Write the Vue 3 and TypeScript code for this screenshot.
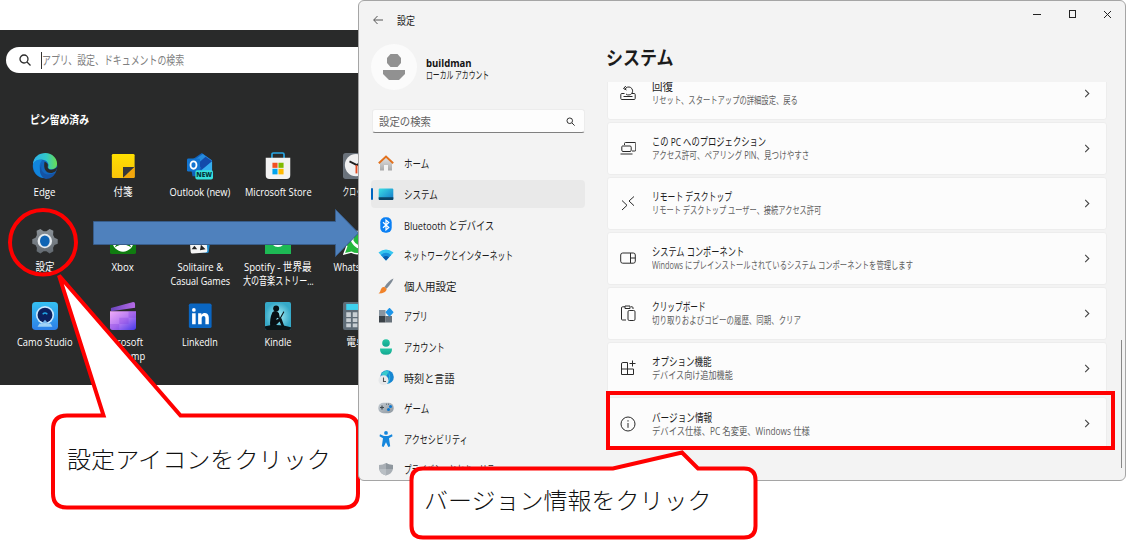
<script setup lang="ts">
interface PinnedApp { icon: string; lines: { text: string; width: number }[] }
interface NavItem { icon: string; text: string; width: number; active?: boolean }
interface Card { icon: string; title: string; titleWidth: number; sub: string; subWidth: number }

// Condenses a label horizontally so that it takes exactly the given width.
const vFit = {
  mounted(el: HTMLElement, binding: { value: number }) {
    const natural = el.offsetWidth
    if (natural > 0) el.style.transform = `scaleX(${binding.value / natural})`
  },
}

const apps: PinnedApp[] = [
  { icon: 'edge', lines: [{ text: 'Edge', width: 22 }] },
  { icon: 'note', lines: [{ text: '付箋', width: 19 }] },
  { icon: 'outlook', lines: [{ text: 'Outlook (new)', width: 61 }] },
  { icon: 'store', lines: [{ text: 'Microsoft Store', width: 67 }] },
  { icon: 'clock', lines: [{ text: 'クロック', width: 27 }] },
  { icon: 'gear', lines: [{ text: '設定', width: 19 }] },
  { icon: 'xbox', lines: [{ text: 'Xbox', width: 22 }] },
  { icon: 'cards', lines: [{ text: 'Solitaire &', width: 46 }, { text: 'Casual Games', width: 60 }] },
  { icon: 'spotify', lines: [{ text: 'Spotify - 世界最', width: 68 }, { text: '大の音楽ストリー...', width: 71 }] },
  { icon: 'whatsapp', lines: [{ text: 'WhatsApp', width: 44 }] },
  { icon: 'camo', lines: [{ text: 'Camo Studio', width: 56 }] },
  { icon: 'clip', lines: [{ text: 'Microsoft', width: 42 }, { text: 'Clipchamp', width: 46 }] },
  { icon: 'linkedin', lines: [{ text: 'LinkedIn', width: 36 }] },
  { icon: 'kindle', lines: [{ text: 'Kindle', width: 27 }] },
  { icon: 'calc', lines: [{ text: '電卓', width: 19 }] },
]

const nav: NavItem[] = [
  { icon: 'home', text: 'ホーム', width: 25 },
  { icon: 'system', text: 'システム', width: 34, active: true },
  { icon: 'bluetooth', text: 'Bluetooth とデバイス', width: 90 },
  { icon: 'wifi', text: 'ネットワークとインターネット', width: 109 },
  { icon: 'brush', text: '個人用設定', width: 53 },
  { icon: 'apps', text: 'アプリ', width: 24 },
  { icon: 'account', text: 'アカウント', width: 41 },
  { icon: 'time', text: '時刻と言語', width: 51 },
  { icon: 'game', text: 'ゲーム', width: 25 },
  { icon: 'access', text: 'アクセシビリティ', width: 64 },
  { icon: 'shield', text: 'プライバシーとセキュリティ', width: 98 },
]

const cards: Card[] = [
  { icon: 'recovery', title: '回復', titleWidth: 21, sub: 'リセット、スタートアップの詳細設定、戻る', subWidth: 146 },
  { icon: 'project', title: 'この PC へのプロジェクション', titleWidth: 114, sub: 'アクセス許可、ペアリング PIN、見つけやすさ', subWidth: 157 },
  { icon: 'remote', title: 'リモート デスクトップ', titleWidth: 80, sub: 'リモート デスクトップ ユーザー、接続アクセス許可', subWidth: 169 },
  { icon: 'component', title: 'システム コンポーネント', titleWidth: 92, sub: 'Windows にプレインストールされているシステム コンポーネントを管理します', subWidth: 261 },
  { icon: 'clipboard', title: 'クリップボード', titleWidth: 54, sub: '切り取りおよびコピーの履歴、同期、クリア', subWidth: 149 },
  { icon: 'optional', title: 'オプション機能', titleWidth: 60, sub: 'デバイス向け追加機能', subWidth: 81 },
  { icon: 'info', title: 'バージョン情報', titleWidth: 60, sub: 'デバイス仕様、PC 名変更、Windows 仕様', subWidth: 158 },
]
</script>

<template>
  <div class="stage">
    <svg class="sprite" aria-hidden="true">
      <defs>
        <linearGradient id="gEdge" x1="0" y1="0" x2="1" y2="0"><stop offset="0" stop-color="#2cb0ee" /><stop offset=".55" stop-color="#32c8c8" /><stop offset="1" stop-color="#6ade50" /></linearGradient>
        <linearGradient id="gNote" x1="0" y1="0" x2="0" y2="1"><stop offset="0" stop-color="#ffe000" /><stop offset="1" stop-color="#f9c40b" /></linearGradient>
        <linearGradient id="gGear" x1="0" y1="0" x2="0" y2="1"><stop offset="0" stop-color="#8b9298" /><stop offset="1" stop-color="#626970" /></linearGradient>
        <linearGradient id="gCamo" x1="0" y1="0" x2="0" y2="1"><stop offset="0" stop-color="#35c1f2" /><stop offset="1" stop-color="#2d7fe8" /></linearGradient>
        <linearGradient id="gClip" x1="0" y1="0" x2="1" y2="1"><stop offset="0" stop-color="#f0aaf8" /><stop offset=".5" stop-color="#b57af2" /><stop offset="1" stop-color="#4338e8" /></linearGradient>
        <linearGradient id="gClipTop" x1="0" y1="0" x2="1" y2="0"><stop offset="0" stop-color="#6a45bd" /><stop offset="1" stop-color="#b76be8" /></linearGradient>
        <radialGradient id="gKindle"><stop offset="0" stop-color="#a8f0f8" /><stop offset="1" stop-color="#36a9c8" /></radialGradient>
        <linearGradient id="gSystem" x1="0" y1="0" x2="1" y2="1"><stop offset="0" stop-color="#3ae0e5" /><stop offset="1" stop-color="#1475c8" /></linearGradient>
        <linearGradient id="gHome" x1="0" y1="0" x2="0" y2="1"><stop offset="0" stop-color="#e4e4e4" /><stop offset="1" stop-color="#a8a8a8" /></linearGradient>
        <linearGradient id="gTeal" x1="0" y1="0" x2="0" y2="1"><stop offset="0" stop-color="#26c6a4" /><stop offset="1" stop-color="#12a590" /></linearGradient>
        <linearGradient id="gPad" x1="0" y1="0" x2="1" y2="1"><stop offset="0" stop-color="#c3cbd2" /><stop offset="1" stop-color="#8e979f" /></linearGradient>
      </defs>

      <symbol id="i-edge" viewBox="0 0 28 30">
        <circle cx="14" cy="15" r="13.2" fill="#1266bd" />
        <path d="M1 14C1 5 8 1 14.500 1 22 1 27 7 27 12.500c0 4-3 6-6.500 6-2 0-3.500-1-3-2.500C19 12 15 8 10 8 5 8 2 11 1 14Z" fill="url(#gEdge)" />
        <path d="M1 14C2 9 7 7 11 9c-4 3-4 11 2 18.500C6 28 1 21 1 14Z" fill="#1185dc" />
        <path d="M11 12c-3 5 0 13 8 12 3 0 5-1 7-3-2 5-6 8-11 8-6-2-9-10-4-17Z" fill="#1553a4" />
        <path d="M13.500 10.500c2.500 1 4 2.500 3.500 4.500-.8 2 1 4 4 4 2 0 4-1 6-3 0 4-3 6.500-7 6.500-5 0-8-4-6.500-12Z" fill="#292a2a" />
      </symbol>
      <symbol id="i-note" viewBox="0 0 28 30">
        <rect x="2" y="2" width="24.500" height="26" rx="1.500" fill="url(#gNote)" />
        <path d="M14 28V16h12.500Z" fill="#37373a" /><path d="M14 28L26.500 16V26.500Q26.500 28 25 28Z" fill="#f3a60c" />
      </symbol>
      <symbol id="i-outlook" viewBox="0 0 28 30">
        <path d="M3 10 16 1l11 8v17H6Z" fill="#1162bb" /><path d="M6 10 17 2l10 7-11 9Z" fill="#268bdd" /><path d="M12 12 20 5l7 5-11 9Z" fill="#134bab" />
        <path d="M16 19 27 10v11H16Z" fill="#35aef0" />
        <rect x="0" y="7" width="14" height="14" rx="1.500" fill="#1274d0" />
        <ellipse cx="7" cy="14" rx="3.200" ry="4" fill="none" stroke="#fff" stroke-width="2" />
        <rect x="9" y="19.500" width="19" height="10" rx="2" fill="#36e0dc" />
        <text x="18.500" y="27.300" class="badge-text">NEW</text>
      </symbol>
      <symbol id="i-store" viewBox="0 0 28 30">
        <path d="M7.500 7V2.500Q7.500 1 9 1H19Q20.500 1 20.500 2.500V7" fill="none" stroke="#27a7e5" stroke-width="1.800" />
        <path d="M.8 6h26.400v19q0 4-4 4H4.800q-4 0-4-4Z" fill="#f2f2f2" />
        <path fill="#f25022" d="M8 11.500h5.500V17H8Z" /><path fill="#7fba00" d="M14.500 11.500H20V17h-5.500Z" /><path fill="#00a4ef" d="M8 18h5.500v6H8Z" /><path fill="#ffb900" d="M14.500 18H20v6h-5.500Z" />
      </symbol>
      <symbol id="i-clock" viewBox="0 0 28 30">
        <rect x="0" y="1" width="28" height="28" rx="3" fill="#6a727b" /><circle cx="14" cy="14" r="12" fill="#f0f0f0" />
        <path d="M7 10l8 4 7-5" fill="none" stroke="#202020" stroke-width="2" /><path d="M14.500 14v9" stroke="#e54b20" stroke-width="2" />
      </symbol>
      <symbol id="i-gear" viewBox="0 0 28 30">
        <path d="M9 2l3.500 2.500h3L19 2l4 2-.3 4.500 1.500 3 3.500 1.500v5l-3.500 1.300-1.500 3L23 26l-4 2.500-3.500-2.500h-3L9 28.500 5 26l.3-3.700-1.500-3L.3 18v-5l3.500-1.500 1.500-3L5 4Z" fill="url(#gGear)" />
        <circle cx="13.800" cy="15" r="7.800" fill="#e6ebef" /><ellipse cx="13.800" cy="15" rx="5.200" ry="6" fill="#0f64b4" />
      </symbol>
      <symbol id="i-xbox" viewBox="0 0 28 30">
        <rect x="0" y="1" width="28" height="28" rx="2" fill="#107c10" /><circle cx="14" cy="15" r="11.500" fill="#fff" />
        <path d="M5 22Q9 15 14 12q5 3 9 10-3-2-5-2.500L14 17l-4 2.500Q8 20 5 22Z" fill="#107c10" />
      </symbol>
      <symbol id="i-cards" viewBox="0 0 28 30">
        <rect x="7" y="3" width="18" height="24" rx="2" transform="rotate(8 15 15)" fill="#1b88cc" /><rect x="3" y="4" width="18" height="24" rx="2" transform="rotate(-5 12 15)" fill="#f4f4f4" />
        <path d="M5 24l3-4 3 4Z" fill="#222" /><path d="M14 25l1-6 5 5Z" fill="#222" />
      </symbol>
      <symbol id="i-spotify" viewBox="0 0 28 30">
        <rect x="0" y="1" width="28" height="28" fill="#1db954" /><circle cx="14" cy="13.500" r="8" fill="#fff" /><path d="M9 18q5-2 10 1" fill="none" stroke="#1db954" stroke-width="1.500" />
      </symbol>
      <symbol id="i-whatsapp" viewBox="0 0 28 30">
        <path d="M1 29 4 21A12 12 0 1 1 9 27Z" fill="#25b83d" stroke="#fff" stroke-width="1.500" /><path d="M8 9q2-2 4 3l-1 2q2 4 5 5l2-1q4 1 3 4-4 3-9-2T8 9Z" fill="#fff" />
      </symbol>
      <symbol id="i-camo" viewBox="0 0 28 30">
        <rect y="0" width="28" height="30" rx="4" fill="url(#gCamo)" />
        <path d="M8 23h12l2 3.500H6Z" fill="#9fd2f7" /><circle cx="14" cy="14" r="9.800" fill="#c9e8fd" /><circle cx="14" cy="14" r="8" fill="#0c205e" /><path d="M10.500 23l3.500-4 3.500 4Z" fill="#75b4ec" /><path d="M11.500 13q2.500-2.500 5 0" fill="none" stroke="#22a9e6" stroke-width="1.500" />
      </symbol>
      <symbol id="i-clip" viewBox="0 0 28 30">
        <path d="M1 6.500 25 0q2 0 2 2v4L1 10Z" fill="url(#gClipTop)" /><path d="M0 10h28v17q0 3-3 3H3q-3 0-3-3Z" fill="url(#gClip)" /><path d="M0 23.500h10V17h10v-7h8v7h-8v6.500H10V30H3q-3 0-3-3Z" fill="#823bdf" opacity=".3" />
      </symbol>
      <symbol id="i-linkedin" viewBox="0 0 28 30">
        <rect x="2" y="1.500" width="24.500" height="26.500" rx="2" fill="#0a66c2" /><path d="M5.500 12h3.800v12H5.500ZM12 12h3.500v1.800c2-3.200 8-2.600 8 2.700V24h-3.700v-6.500c0-3.500-4-3-4 0V24H12Z" fill="#fff" /><circle cx="7.400" cy="8.500" r="2" fill="#fff" />
      </symbol>
      <symbol id="i-kindle" viewBox="0 0 28 30">
        <rect width="28" height="30" rx="2" fill="url(#gKindle)" /><path d="M0 26q14-3 28 1v1q0 2-2 2H2q-2 0-2-2Z" fill="#0a1518" />
        <circle cx="12" cy="7" r="3.200" fill="#081014" /><path d="M8 11q4-3 7 1l1 5 4-7 .8.800-4.600 8.200-3-2-1.500 2 6-1.500 3 8.500-2.500.5-2.500-5.500-4 4-6 1q-1-8 2.300-15Z" fill="#081014" />
      </symbol>
      <symbol id="i-calc" viewBox="0 0 28 30">
        <rect x="0" width="28" height="30" rx="2" fill="#5f6c77" /><rect x="3.500" y="2" width="21" height="6.500" fill="#3fd1ee" /><path d="M3.500 11h5v5h-5ZM10.500 11h5v5h-5ZM17.500 11h5v5h-5ZM3.500 17.500h5v4h-5ZM10.500 17.500h5v4h-5ZM17.500 17.500h5v4h-5ZM3.500 23h5v4h-5ZM10.500 23h5v4h-5ZM17.500 23h5v4h-5Z" fill="#c9cfd4" />
      </symbol>

      <symbol id="i-home" viewBox="0 0 16 16"><path d="M2 7.500 8 2l6 5.500V15.500H10V10H6v5.500H2Z" fill="url(#gHome)" /><path d="M.8 8.300 8 1.600l7.200 6.700" fill="none" stroke="#e2711d" stroke-width="1.900" /></symbol>
      <symbol id="i-system" viewBox="0 0 16 16"><rect x=".7" y="2.500" width="14.600" height="11.500" rx="1" fill="url(#gSystem)" /><path d="M.7 11.300h14.600v1.700q0 1-1 1H1.700q-1 0-1-1Z" fill="#0b4668" /></symbol>
      <symbol id="i-bluetooth" viewBox="0 0 16 16"><rect x="2.300" y=".3" width="11.400" height="15.400" rx="5" fill="#0b80f4" /><path d="M5 5.300 10.800 10.500 8 13V3l2.800 2.500L5 10.700" fill="none" stroke="#fff" stroke-width="1.200" /></symbol>
      <symbol id="i-wifi" viewBox="0 0 16 16"><path d="M.5 5.500Q8-.5 15.500 5.500L8 13.500Z" fill="#35c5ef" /><path d="M2.800 7.900Q8 3.500 13.200 7.900L8 13.500Z" fill="#1890dc" /><path d="M5 10.200Q8 7.700 11 10.200L8 13.500Z" fill="#0a58a8" /></symbol>
      <symbol id="i-brush" viewBox="0 0 16 16"><path d="M15.500.5q-5 2-9 8.500l2 1.800Q14 5 15.500.5Z" fill="#7e8995" /><path d="M6.300 8.700l2.400 2.400q-.5 4.400-8.200 4.400Q2.500 14 2.800 11.500 3.500 9 6.300 8.700Z" fill="#f1832a" /></symbol>
      <symbol id="i-apps" viewBox="0 0 16 16"><path d="M1 2h6.500v6H1Z" fill="#8995a0" /><path d="M1 8h6.500v6.500H1Z" fill="#3b4248" /><path d="M7.500 8H14v6.500H7.500Z" fill="#68727b" /><path d="M11.500.7 14.700 4.200 11.500 7.700 8.300 4.200Z" fill="#1d95e8" stroke="#1d95e8" stroke-width="1.500" stroke-linejoin="round" /></symbol>
      <symbol id="i-account" viewBox="0 0 16 16"><circle cx="8" cy="4" r="3.800" fill="url(#gTeal)" /><path d="M2 9.500h12q.5 6.300-6 6.300T2 9.500Z" fill="url(#gTeal)" /></symbol>
      <symbol id="i-time" viewBox="0 0 16 16"><circle cx="9" cy="7" r="6.800" fill="#1686d2" /><path d="M3 4Q7-1 11 1L8 7Z" fill="#38c9cc" /><path d="M9 .5q5 6 1 13" fill="none" stroke="#29b9dc" /><circle cx="5.500" cy="10.300" r="5" fill="#e6e8ea" /><path d="M5.500 7.500v4H8" fill="none" stroke="#4c5358" stroke-width="1.100" /></symbol>
      <symbol id="i-game" viewBox="0 0 16 16"><rect x=".3" y="2.800" width="15.400" height="10.400" rx="5" fill="url(#gPad)" /><path d="M4 5.500v4M2 7.500h4" stroke="#424a51" stroke-width="1.200" /><path d="M8 4.200h4" stroke="#555d65" stroke-dasharray="1 1" /><circle cx="12.500" cy="6.500" r="1.500" fill="#0b78d0" /><circle cx="10.500" cy="9.500" r="1.500" fill="#0b78d0" /></symbol>
      <symbol id="i-access" viewBox="0 0 16 16"><circle cx="8" cy="1.900" r="1.900" fill="#1586dc" /><path d="M2 3.300 6 5h4l4-1.700.5 1.900L11 7.200l1.200 8L10.300 16 8 11.200 5.700 16l-1.900-.8L5 7.200 1.500 5.200Z" fill="#1586dc" /></symbol>
      <symbol id="i-shield" viewBox="0 0 16 16"><path d="M1 4Q5 4 8 2q3 2 7 2v4q-1 5-7 6.500Q2 13 1 8Z" fill="#a9afb5" /><path d="M8 2q3 2 7 2v4H8Z" fill="#8f979e" /><path d="M1.500 8H8v6.500Q2.500 13 1.500 8Z" fill="#b9bfc4" /></symbol>

      <symbol id="i-recovery" viewBox="0 0 16 16"><path d="M4.500 8.500H1.800Q.8 8.500.8 9.500v4q0 1 1 1h12.400q1 0 1-1v-4q0-1-1-1H12M3.500 11.500H12.500M6 9A4 4 0 1 0 5 4.300M5.800 1 3.500 3.500 6.500 5" /></symbol>
      <symbol id="i-project" viewBox="0 0 16 16"><path d="M4.500 5V3.500q0-1 1-1H15q.8 0 .8 1V10q0 1-1 1H12M2.500 6H10q1.200 0 1.200 1.200v3Q11.200 11.500 10 11.500H3q-1.200 0-1.200-1.300V7Q1.800 6 2.500 6M.5 14H12.500" /></symbol>
      <symbol id="i-remote" viewBox="0 0 16 16"><path d="M2 5.500 7 10.300 2 15M14 1.500 9 6l5 4.700" /></symbol>
      <symbol id="i-component" viewBox="0 0 16 16"><rect x=".7" y="3" width="14.600" height="10.200" rx="2" /><path d="M10.500 3v10M10.500 8h4.800" /></symbol>
      <symbol id="i-clipboard" viewBox="0 0 16 16"><path d="M5 1.800H2.500Q1.500 1.800 1.500 3v11q0 1 1 1H6M11 1.800h1q1 0 1 1V4M5 1h5v2.500H5Z" /><rect x="8" y="5.500" width="7" height="10" rx="1.300" /></symbol>
      <symbol id="i-optional" viewBox="0 0 16 16"><path d="M7.500 2.500H2.800Q1.500 2.500 1.500 4v10.500H13.500V9H1.500M7.500 2.500v12M12.500.5v6M9.500 3.500h6" /></symbol>
      <symbol id="i-info" viewBox="0 0 16 16"><circle cx="8" cy="8" r="7" /><path d="M8 7v4.800M8 4.200v1.400" /></symbol>
    </svg>

    <section class="start">
      <div class="start-search">
        <svg class="lens" viewBox="0 0 12 12"><circle cx="5" cy="5" r="4" /><path d="M8 8l3.500 3.500" /></svg>
        <i class="caret"></i>
        <span v-fit="142" class="label">アプリ、設定、ドキュメントの検索</span>
      </div>
      <h2 class="pinned"><span v-fit="59" class="label">ピン留め済み</span></h2>
      <div class="app-grid">
        <div v-for="app in apps" :key="app.icon" class="app">
          <svg class="app-icon"><use :href="`#i-${app.icon}`" /></svg>
          <span v-for="line in app.lines" :key="line.text" v-fit="line.width" class="app-line">{{ line.text }}</span>
        </div>
      </div>
    </section>

    <svg class="overlay" viewBox="0 0 1127 540">
      <path class="arrow" d="M93.500 221.500H335.500V209.500L358.500 233 335.500 256.500V244.500H93.500Z" />
      <ellipse class="mark" cx="43" cy="242.300" rx="33" ry="32.300" />
      <path class="mark filled" d="M67 415.500H103.500L59 275.500 180.500 415.500H344Q358 415.500 358 429.500V493.500Q358 507.500 344 507.500H67Q53 507.500 53 493.500V429.500Q53 415.500 67 415.500Z" />
    </svg>

    <section class="window">
      <header class="titlebar">
        <svg class="back" viewBox="0 0 10 10"><path d="M10 5H.8M4.500 1 .7 5l3.800 4" /></svg>
        <span v-fit="18" class="label window-name">設定</span>
        <svg class="controls" viewBox="0 0 80 12"><path d="M0 6.500h8M36 2.500h7M36 9.500h7M36.500 2v8M42.500 2v8" /><path d="M71 3l7 7M78 3l-7 7" /></svg>
      </header>
      <div class="body">
        <aside class="side">
          <div class="profile">
            <div class="avatar"><svg viewBox="0 0 22 26"><path d="M7.500 0h7L18 4v5l-3.500 4h-7L4 9V4Z" /><path d="M0 16h22v4l-6 6H6l-6-6Z" /></svg></div>
            <div class="who">
              <b><span v-fit="46" class="label">buildman</span></b>
              <span v-fit="63" class="label">ローカル アカウント</span>
            </div>
          </div>
          <div class="side-search">
            <span v-fit="52" class="label">設定の検索</span>
            <svg class="lens" viewBox="0 0 12 12"><circle cx="5" cy="5" r="3.700" /><path d="M8 8l3.500 3.500" /></svg>
          </div>
          <nav class="nav">
            <div v-for="item in nav" :key="item.icon" class="nav-item" :class="{ active: item.active }">
              <svg class="nav-icon"><use :href="`#i-${item.icon}`" /></svg>
              <span v-fit="item.width" class="label">{{ item.text }}</span>
            </div>
          </nav>
        </aside>
        <main class="main">
          <h1><span v-fit="67" class="label">システム</span></h1>
          <div class="scroller">
            <div class="cards">
              <div v-for="card in cards" :key="card.icon" class="card">
                <svg class="card-icon"><use :href="`#i-${card.icon}`" /></svg>
                <div class="card-text">
                  <span v-fit="card.titleWidth" class="label title">{{ card.title }}</span>
                  <span v-fit="card.subWidth" class="label sub">{{ card.sub }}</span>
                </div>
                <svg class="chevron" viewBox="0 0 6 10"><path d="M1 1l4 4-4 4" /></svg>
              </div>
            </div>
          </div>
        </main>
        <i class="scrollbar"></i>
      </div>
    </section>

    <svg class="overlay" viewBox="0 0 1127 540">
      <rect class="mark" x="608" y="393" width="505" height="55" />
      <path class="mark filled" d="M423 468.500H613L682 452.500 698 468.500H744Q755.500 468.500 755.500 480V526Q755.500 537.500 744 537.500H423Q411.500 537.500 411.500 526V480Q411.500 468.500 423 468.500Z" />
    </svg>
    <p class="note first"><span v-fit="264" class="label">設定アイコンをクリック</span></p>
    <p class="note second"><span v-fit="288" class="label">バージョン情報をクリック</span></p>
  </div>
</template>

<style>
html, body { margin: 0; background: #fff; overflow: hidden; }
</style>

<style scoped>
.stage { position: relative; width: 1127px; height: 540px; overflow: hidden; background: #fff; font-family: "Open Sans", "Noto Sans CJK JP", sans-serif; font-size: 11px; color: #1b1b1b; }
.stage * { box-sizing: border-box; }
.sprite { position: absolute; width: 0; height: 0; }
.badge-text { font: 800 7px "Open Sans", sans-serif; text-anchor: middle; fill: #06363d; }
.label { display: block; width: max-content; white-space: nowrap; transform-origin: left center; }
.lens { fill: none; stroke: #2b2b2b; stroke-width: 1.3; }

.start { position: absolute; left: 0; top: 30px; width: 360px; height: 355px; background: #292a2a; overflow: hidden; }
.start-search { display: flex; align-items: center; margin: 17px 0 0 6px; padding-left: 13px; width: 400px; height: 26px; border-radius: 13px; background: #fff; color: #808080; font-size: 12px; }
.start-search .lens { width: 12px; height: 12px; }
.caret { width: 1px; height: 17px; margin-left: 10px; background: #333; }
.pinned { margin: 38px 0 0 30px; height: 18px; line-height: 18px; font-size: 11.5px; font-weight: 700; color: #fff; }
.app-grid { display: grid; grid-template-columns: repeat(5, 77.7px); grid-auto-rows: 75px; width: 389px; margin: 23px 0 0 6px; }
.app { display: flex; flex-direction: column; align-items: center; color: #fff; }
.app-icon { width: 26px; height: 28px; margin-bottom: 5px; flex: none; }
.app-line { display: block; width: max-content; height: 14px; line-height: 14px; white-space: nowrap; font-size: 11px; }

.overlay { position: absolute; left: 0; top: 0; width: 1127px; height: 540px; }
.arrow { fill: #4f81bd; stroke: #385d8a; }
.mark { fill: none; stroke: #f00; stroke-width: 4; }
.filled { fill: #fff; }

.window { position: absolute; left: 358px; top: 0; width: 768px; height: 481px; border: 1px solid #a5a5a5; border-radius: 6px; background: #f3f3f3; overflow: hidden; }
.titlebar { display: flex; align-items: center; height: 38px; padding-left: 14px; }
.back { width: 10px; height: 10px; margin-top: -1px; fill: none; stroke: #555; }
.window-name { margin: -1px 0 0 14px; }
.controls { width: 80px; height: 12px; margin-left: auto; margin-right: 12px; margin-top: -13px; fill: none; stroke: #222; }
.body { display: flex; height: 441px; }
.side { width: 226px; padding-left: 12px; flex: none; }
.profile { display: flex; align-items: center; height: 46px; margin-top: 5px; }
.avatar { display: flex; align-items: center; justify-content: center; width: 46px; height: 46px; border-radius: 50%; background: #fbfbfb; }
.avatar svg { width: 22px; height: 26px; fill: #919191; }
.who { margin-left: 9px; padding-top: 4px; line-height: 13px; font-size: 10.5px; }
.who b { display: block; font-size: 11px; color: #111; }
.side-search { display: flex; align-items: center; justify-content: space-between; width: 213px; height: 24px; margin: 19px 0 16.4px 1px; padding: 0 9px 0 6px; border-radius: 3px; border: 1px solid #ececec; border-bottom: 1px solid #808080; background: #fdfdfd; font-size: 11px; color: #626262; }
.side-search .lens { width: 9px; height: 9px; }
.nav { display: flex; flex-direction: column; gap: 2.6px; }
.nav-item { position: relative; display: flex; align-items: center; flex: none; width: 214px; height: 28px; padding-left: 7px; border-radius: 4px; font-size: 11.5px; }
.nav-item.active { background: #e9e9e9; }
.nav-item.active::before { content: ""; position: absolute; left: 0; top: 8px; width: 2px; height: 12px; border-radius: 1px; background: #0067c0; }
.nav-icon { width: 16px; height: 16px; margin-right: 10px; flex: none; }
.main { width: 500px; margin-left: 22px; flex: none; }
h1 { margin: 4px 0 0 -1px; height: 30px; line-height: 30px; font-size: 19px; font-weight: 700; }
.scroller { height: 407px; margin-top: 9px; overflow: hidden; }
.cards { display: flex; flex-direction: column; gap: 2.1px; margin-top: -15.5px; }
.card { display: flex; align-items: center; flex: none; height: 53px; padding: 0 16px 0 12px; border: 1px solid #ededed; border-radius: 3px; background: #fcfcfc; }
.card-icon { width: 16px; height: 16px; margin-right: 16px; fill: none; stroke: #2a2a2a; stroke-width: 1; flex: none; }
.card-text { flex: 1; }
.title { height: 15px; line-height: 15px; font-size: 11.5px; color: #1b1b1b; }
.sub { height: 13px; line-height: 13px; font-size: 10px; color: #606060; }
.chevron { width: 6px; height: 9px; fill: none; stroke: #444; stroke-width: 1.2; }
.scrollbar { width: 1px; height: 128px; margin: 301px 0 0 14px; background: #888; }

.note { position: absolute; margin: 0; height: 34px; line-height: 34px; font-family: "Noto Sans CJK JP", sans-serif; font-weight: 300; font-size: 23px; color: #111; }
.first { left: 67px; top: 441px; }
.second { left: 424px; top: 482px; }
</style>
